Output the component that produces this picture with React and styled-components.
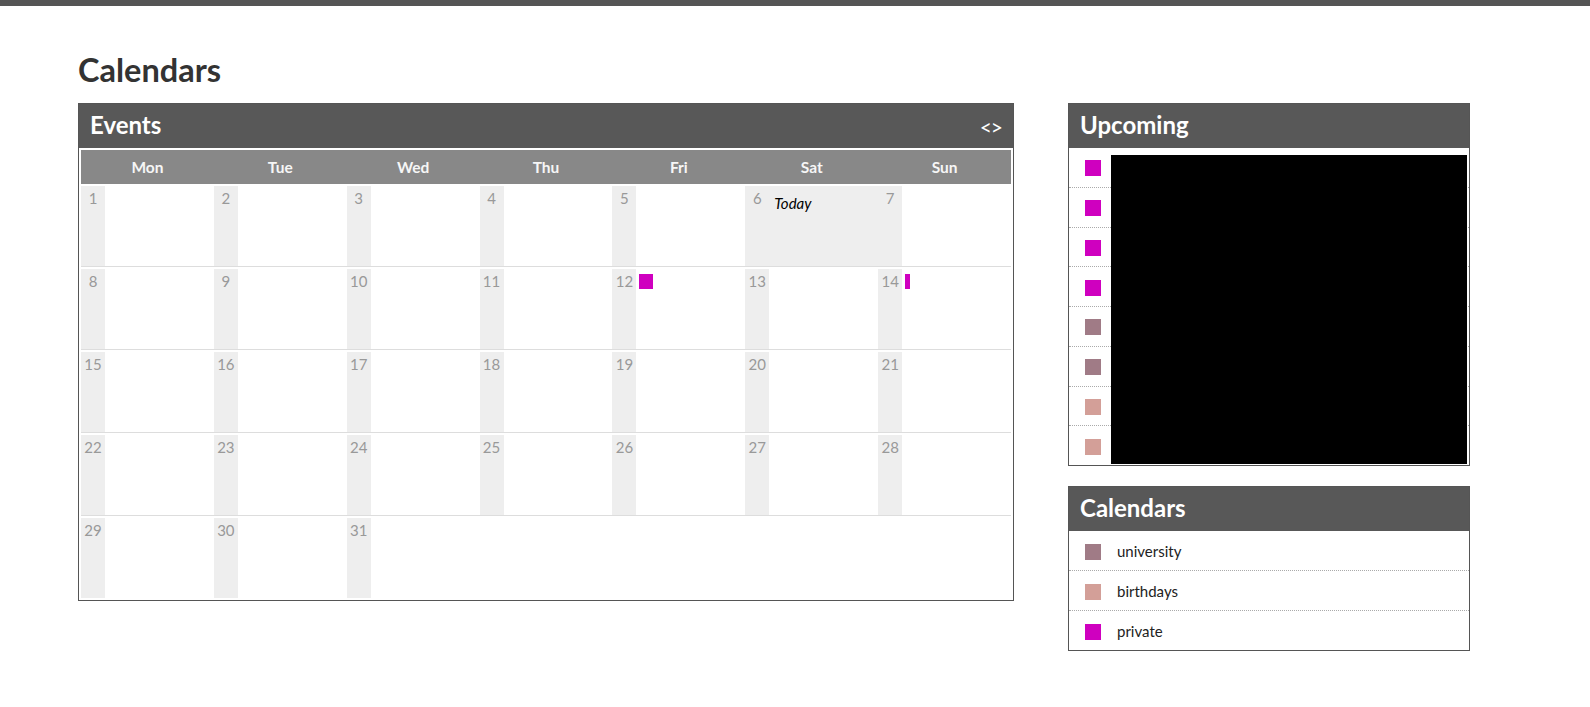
import styled, { createGlobalStyle } from "styled-components";

const GlobalStyle = createGlobalStyle`
  body {
    margin: 0;
    background: #fff;
    font-family: Lato, "Open Sans", "Liberation Sans", sans-serif;
  }
`;

const TopBar = styled.div`
  height: 6px;
  background: #555;
`;

const Page = styled.div`
  padding: 44px 0 40px 78px;
`;

const Title = styled.h1`
  margin: 0 0 13px;
  font-size: 32.5px;
  line-height: 40px;
  font-weight: 700;
  color: #333;
`;

const Columns = styled.div`
  display: flex;
  align-items: flex-start;
  gap: 54px;
`;

const Side = styled.div`
  display: flex;
  flex-direction: column;
  gap: 20px;
`;

const Panel = styled.section`
  width: ${props => props.$width}px;
  box-sizing: border-box;
  border: 1px solid #555;
  background: #fff;
`;

const PanelHeader = styled.header`
  height: 44px;
  box-sizing: border-box;
  padding: 0 11px 4px;
  display: flex;
  align-items: center;
  justify-content: space-between;
  background: #585858;
  color: #fff;

  h2 {
    margin: 0;
    font-size: 24px;
    font-weight: 700;
  }
`;

const Nav = styled.div`
  display: flex;
  font-size: 21px;
  line-height: 1;
  padding-top: 4px;
  letter-spacing: -1px;

  span {
    cursor: pointer;
  }
`;

const CalendarBody = styled.div`
  padding: 2px;
`;

const DayHeader = styled.div`
  display: grid;
  grid-template-columns: repeat(7, 1fr);
  height: 34px;
  background: #888;
  color: #f6f6f6;
  font-size: 15.5px;
  font-weight: 700;

  div {
    display: flex;
    align-items: center;
    justify-content: center;
  }
`;

const Week = styled.div`
  display: grid;
  grid-template-columns: repeat(7, 1fr);
  padding-top: 2px;
  border-bottom: 1px solid #ddd;

  &:last-child {
    border-bottom: none;
  }
`;

const Cell = styled.div`
  display: flex;
  height: 80px;
  background: ${props => (props.$today ? "#eee" : "#fff")};
`;

const DateStrip = styled.div`
  width: 24px;
  flex-shrink: 0;
  background: #eee;
  padding-top: 2px;
  text-align: center;
  font-size: 15px;
  line-height: 20px;
  color: #999;
`;

const CellContent = styled.div`
  flex: 1;
  padding: 5px 3px;
  display: flex;
  align-items: flex-start;
  gap: 3px;
`;

const TodayLabel = styled.span`
  margin: 2px 0 0 2px;
  font-size: 15px;
  font-style: italic;
  line-height: 20px;
  color: #000;
`;

const EventBar = styled.div`
  width: ${props => props.$width}px;
  height: 15px;
  background: ${props => props.$color};
`;

const List = styled.ul`
  position: relative;
  margin: 0;
  padding: 0;
  list-style: none;
`;

const ListRow = styled.li`
  height: ${props => props.$height}px;
  padding-left: 16px;
  display: flex;
  align-items: center;
  gap: 16px;
  border-bottom: 1px dotted #aaa;
  font-size: 15px;
  color: #222;

  &:last-of-type {
    border-bottom: none;
  }
`;

const Swatch = styled.span`
  width: 16px;
  height: 16px;
  flex-shrink: 0;
  margin-top: 2px;
  background: ${props => props.$color};
`;

/* blacked-out event titles in the source screenshot */
const Redacted = styled.div`
  position: absolute;
  top: 7px;
  left: 42px;
  right: 2px;
  bottom: 1px;
  background: #000;
`;

const COLORS = {
  private: "#cf00bf",
  university: "#a07b86",
  birthdays: "#d39f98",
};

const DAYS = ["Mon", "Tue", "Wed", "Thu", "Fri", "Sat", "Sun"];
const TODAY = 6;
const EVENTS = {
  12: [{ width: 14, color: COLORS.private }],
  14: [{ width: 5, color: COLORS.private }],
};

const UPCOMING = [
  "private", "private", "private", "private",
  "university", "university", "birthdays", "birthdays",
];

const CALENDARS = ["university", "birthdays", "private"];

function buildWeeks() {
  const weeks = [];
  for (let w = 0; w < 5; w++) {
    const days = [];
    for (let d = 0; d < 7; d++) {
      const n = w * 7 + d + 1;
      days.push(n <= 31 ? n : null);
    }
    weeks.push(days);
  }
  return weeks;
}

function DayCell({ day }) {
  if (!day) return <Cell />;
  const events = EVENTS[day] || [];
  return (
    <Cell $today={day === TODAY}>
      <DateStrip>{day}</DateStrip>
      <CellContent>
        {day === TODAY && <TodayLabel>Today</TodayLabel>}
        {events.map((ev, i) => (
          <EventBar key={i} $width={ev.width} $color={ev.color} />
        ))}
      </CellContent>
    </Cell>
  );
}

export default function App() {
  const weeks = buildWeeks();

  return (
    <>
      <GlobalStyle />
      <TopBar />
      <Page>
        <Title>Calendars</Title>
        <Columns>
          <Panel $width={936}>
            <PanelHeader>
              <h2>Events</h2>
              <Nav>
                <span>&lt;</span>
                <span>&gt;</span>
              </Nav>
            </PanelHeader>
            <CalendarBody>
              <DayHeader>
                {DAYS.map(d => <div key={d}>{d}</div>)}
              </DayHeader>
              {weeks.map((days, i) => (
                <Week key={i}>
                  {days.map((day, j) => <DayCell key={j} day={day} />)}
                </Week>
              ))}
            </CalendarBody>
          </Panel>

          <Side>
            <Panel $width={402}>
              <PanelHeader>
                <h2>Upcoming</h2>
              </PanelHeader>
              <List>
                {UPCOMING.map((cal, i) => (
                  <ListRow key={i} $height={38.75}>
                    <Swatch $color={COLORS[cal]} />
                  </ListRow>
                ))}
                <Redacted />
              </List>
            </Panel>

            <Panel $width={402}>
              <PanelHeader>
                <h2>Calendars</h2>
              </PanelHeader>
              <List>
                {CALENDARS.map(cal => (
                  <ListRow key={cal} $height={39}>
                    <Swatch $color={COLORS[cal]} />
                    <span>{cal}</span>
                  </ListRow>
                ))}
              </List>
            </Panel>
          </Side>
        </Columns>
      </Page>
    </>
  );
}
